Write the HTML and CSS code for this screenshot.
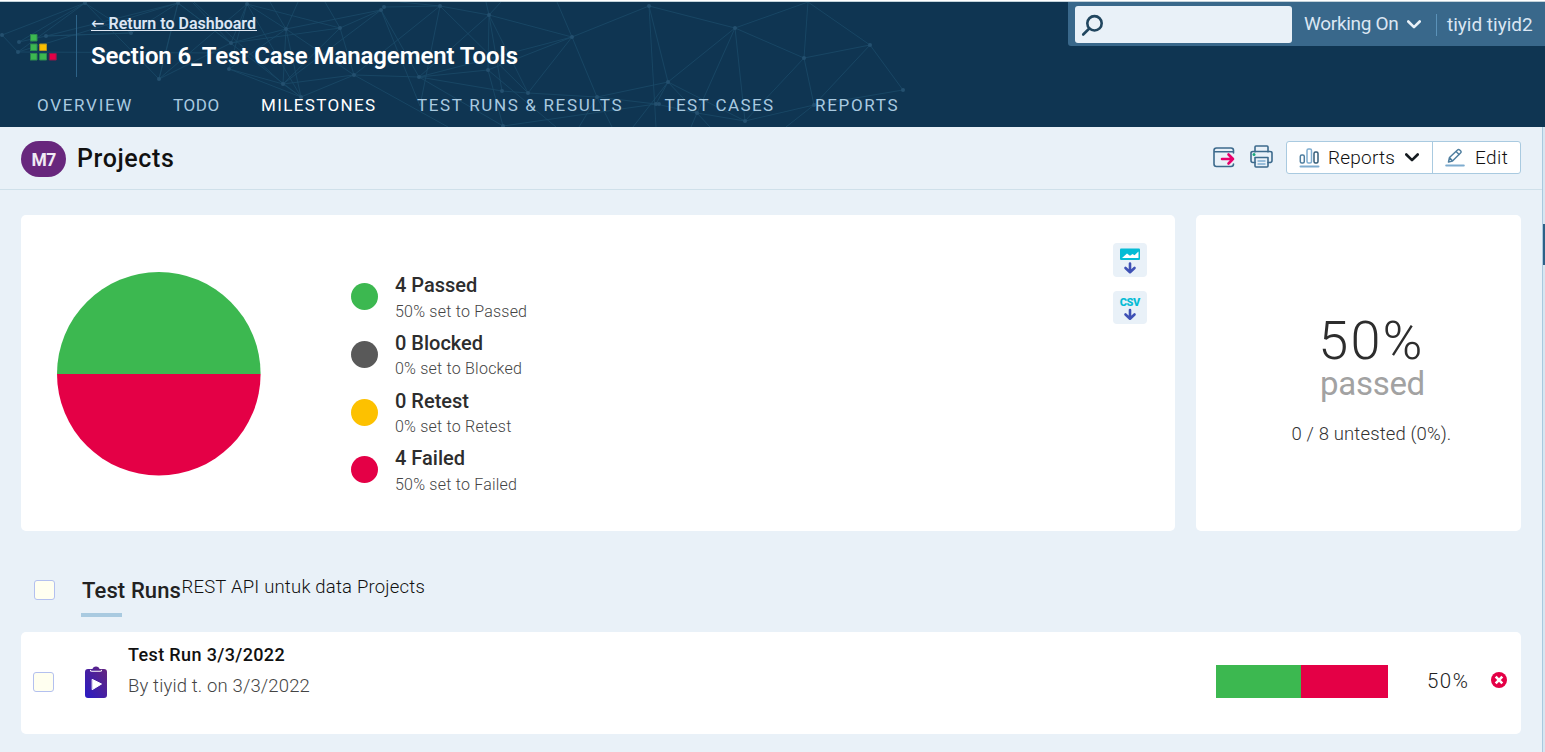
FILE: index.html
```html
<!DOCTYPE html>
<html lang="en">
<head>
<meta charset="utf-8">
<title>Projects - Milestone</title>
<link rel="stylesheet" href="styles.css">
</head>
<body>
<header class="header">
  <svg class="network" width="920" height="125" viewBox="0 2 920 125">
    <g class="network-lines">
      <path d="M2 35 85 3 18 52 2 35M19 42 85 3M19 42 46 36M46 36 178 3 18 52 231 53M85 3 131 33 46 36M85 3 159 79 178 3 231 43 247 4M46 36 131 33 178 3M159 79 178 3M159 79 247 4 229 69M159 79 231 43 286 29 247 4 340 28 231 43 193 3M178 3 301 97 229 69 286 29 283 84 229 69M194 2 283 84 340 28 381 10 286 29M286 29 270 2M286 29 298 2M283 84 301 97 286 29 354 75 340 28M247 4 301 97M340 28 325 2M381 10 283 84 354 75 301 97M384 7 440 6 400 2M381 10 419 77 354 75M381 10 420 106 440 6M440 6 489 15 572 37 649 6 735 28 808 2 870 45 804 58 735 28M440 6 528 93M440 6 354 75M489 15 486 2M489 15 501 2M489 15 488 70 503 126 419 77M489 15 502 91 528 93 597 97 668 82 649 6 656 127M489 15 528 93M489 15 419 77 488 70 572 37M572 37 419 77M572 37 557 2M572 37 528 93M572 37 597 97 612 127M488 70 556 127M419 77 502 91M597 97 656 104 668 82 735 28 697 113 668 82 745 121 735 28M668 82 633 127M656 104 697 113 745 121 814 105 804 58 808 2M804 58 745 121M870 45 903 90 814 105 870 45M814 105 786 127M697 113 691 127M697 113 710 127M503 126 656 104M354 75 448 127M597 97 579 127"/>
    </g>
    <g class="network-nodes">
      <circle cx="2" cy="35" r="2"/><circle cx="19" cy="42" r="2"/><circle cx="18" cy="52" r="2"/><circle cx="46" cy="36" r="2"/><circle cx="85" cy="3" r="2"/><circle cx="178" cy="3" r="2"/><circle cx="247" cy="4" r="2"/><circle cx="286" cy="29" r="2"/><circle cx="340" cy="28" r="2"/><circle cx="131" cy="33" r="2"/><circle cx="231" cy="43" r="2"/><circle cx="229" cy="69" r="2"/><circle cx="159" cy="79" r="2"/><circle cx="283" cy="84" r="2"/><circle cx="301" cy="97" r="2"/><circle cx="354" cy="75" r="2"/><circle cx="381" cy="10" r="2"/><circle cx="384" cy="7" r="2"/><circle cx="440" cy="6" r="2"/><circle cx="489" cy="15" r="2"/><circle cx="572" cy="37" r="2"/><circle cx="419" cy="77" r="2"/><circle cx="488" cy="70" r="2"/><circle cx="502" cy="91" r="2"/><circle cx="528" cy="93" r="2"/><circle cx="597" cy="97" r="2"/><circle cx="503" cy="126" r="2"/><circle cx="649" cy="6" r="2"/><circle cx="668" cy="82" r="2"/><circle cx="656" cy="104" r="2"/><circle cx="659" cy="104" r="2"/><circle cx="697" cy="113" r="2"/><circle cx="745" cy="121" r="2"/><circle cx="735" cy="28" r="2"/><circle cx="804" cy="58" r="2"/><circle cx="870" cy="45" r="2"/><circle cx="903" cy="90" r="2"/><circle cx="814" cy="105" r="2"/>
    </g>
  </svg>
  <div class="header-main">
    <svg class="logo" width="28" height="27" viewBox="0 0 28 27">
      <g class="logo-green"><rect x=".5" y=".5" width="6.5" height="6.5"/><rect x=".5" y="10" width="6.5" height="6.5"/><rect x=".5" y="19.500" width="6.500" height="6.500"/><rect x="10" y="19.500" width="6.500" height="6.500"/></g>
      <rect class="logo-yellow" x="10" y="10" width="6.500" height="6.500"/>
      <rect class="logo-red" x="19.700" y="19.500" width="6.500" height="6.500"/>
    </svg>
    <div class="titles">
      <a class="return"><span class="return-arrow">←</span>Return to Dashboard</a>
      <h1 class="project-title">Section 6_Test Case Management Tools</h1>
    </div>
    <div class="userbar">
      <div class="search">
        <svg width="24" height="24" viewBox="0 0 24 24"><circle cx="13.500" cy="9.300" r="7.200"/><path d="M8.300 14.500 2.200 20.500"/></svg>
      </div>
      <span class="working">Working On</span>
      <svg class="chevron" width="14" height="10" viewBox="0 0 14 10"><path d="M1.300 1.500 7 7.200 12.700 1.500"/></svg>
      <span class="user">tiyid tiyid2</span>
    </div>
  </div>
  <nav class="tabs">
    <a class="tab wide">OVERVIEW</a>
    <a class="tab tight">TODO</a>
    <a class="tab active">MILESTONES</a>
    <a class="tab runs">TEST RUNS &amp; RESULTS</a>
    <a class="tab">TEST CASES</a>
    <a class="tab wide">REPORTS</a>
  </nav>
</header>
<div class="body">
  <main class="content">
    <div class="toolbar">
      <span class="badge">M7</span>
      <h2 class="page-title">Projects</h2>
      <div class="tools">
        <svg class="line-icon export" width="22" height="21" viewBox="0 0 22 21">
          <path d="M20.500 6V3.500Q20.500 1 18 1H3.500Q1 1 1 3.500V17Q1 19.500 3.500 19.500H18Q20.500 19.500 20.500 17M1 4.800H20.500"/>
          <path class="pink" d="M9 12H20M15.500 7.500 20 12 15.500 16.500"/>
        </svg>
        <svg class="line-icon print" width="23" height="23" viewBox="0 0 23 23">
          <path d="M5 7V2Q5 1 6 1H17Q18 1 18 2V7M5 17.500H3Q1 17.500 1 15.500V8Q1 6.500 3 6.500H20Q22 6.500 22 8V15.500Q22 17.500 20 17.500H18"/>
          <path d="M5 12.500H18V21Q18 22 17 22H6Q5 22 5 21Z"/>
          <path class="lightline" d="M8 16H15M8 19H15"/><circle class="dot" cx="4" cy="9.500" r="1.500"/>
        </svg>
        <div class="buttons">
          <a class="button reports">
            <svg width="21" height="20" viewBox="0 0 21 20"><rect class="s1" x="1.300" y="7" width="4" height="8" rx="1.500"/><rect class="s2" x="8" y="1" width="4.500" height="14" rx="1.500"/><rect class="s3" x="15" y="4" width="4" height="11" rx="1.500"/><path class="base" d="M1.500 18.500H19.500"/></svg>
            <span>Reports</span>
            <svg class="chevron dark" width="14" height="10" viewBox="0 0 14 10"><path d="M1.300 1.500 7 7.200 12.700 1.500"/></svg>
          </a>
          <a class="button edit">
            <svg width="20" height="19" viewBox="0 0 20 19"><path class="s1" d="M3.500 14 4.500 9.500 12.500 2Q13.500 1 14.700 2L15.500 2.800Q16.700 4 15.500 5L7.500 13ZM11 3.500 14.200 6.500M4.500 9.500 7.500 13"/><path class="base" d="M1.200 17.500H18.800"/></svg>
            <span>Edit</span>
          </a>
        </div>
      </div>
    </div>
    <div class="summary">
      <section class="card chart">
        <svg class="pie" width="204" height="204" viewBox="0 0 204 204"><path class="fill-passed" d="M0 102A101.800 102 0 0 1 203.600 102Z"/><path class="fill-failed" d="M0 102A101.800 101.500 0 0 0 203.600 102Z"/></svg>
        <ul class="legend">
          <li><i class="bullet passed"></i><div><b>4 Passed</b><small>50% set to Passed</small></div></li>
          <li><i class="bullet blocked"></i><div><b>0 Blocked</b><small>0% set to Blocked</small></div></li>
          <li><i class="bullet retest"></i><div><b>0 Retest</b><small>0% set to Retest</small></div></li>
          <li><i class="bullet failed"></i><div><b>4 Failed</b><small>50% set to Failed</small></div></li>
        </ul>
        <div class="downloads">
          <a class="download"><svg width="34" height="34" viewBox="0 0 34 34"><rect class="cyan" x="7" y="5.500" width="20" height="11.500" rx="1"/><path class="mountain" d="M9 15 14 10.500 17 12.800 19.500 11 21.500 12.200 25.500 8.500V15Z"/><path class="down" d="M17 20.500V29M12.500 25 17 29.200 21.500 25"/></svg></a>
          <a class="download"><svg width="34" height="33" viewBox="0 0 34 33"><text class="csv" x="6.800" y="15" textLength="20.500">CSV</text><path class="down" d="M17 19V27.500M12.500 23.500 17 27.700 21.500 23.500"/></svg></a>
        </div>
      </section>
      <section class="card score">
        <div class="score-value">50%</div>
        <div class="score-label">passed</div>
        <div class="score-note">0 / 8 untested (0%).</div>
      </section>
    </div>
    <div class="section-head">
      <span class="checkbox"></span>
      <h3 class="section-title">Test Runs</h3>
      <span class="section-note">REST API untuk data Projects</span>
    </div>
    <section class="card run">
      <span class="checkbox"></span>
      <svg class="clipboard" width="24" height="33" viewBox="0 0 24 33">
        <defs><linearGradient id="violet" x1="0" y1="1" x2="1" y2="0"><stop offset="0" stop-color="#291bc5"/><stop offset="1" stop-color="#67257b"/></linearGradient></defs>
        <path fill="url(#violet)" d="M4 3H8.500Q9 .500 12 .500T15.500 3H20Q23 3 23 6V29Q23 32 20 32H4Q1 32 1 29V6Q1 3 4 3Z"/>
        <path class="clip" d="M6.500 4.200Q6.500 5.300 8 5.300H16Q17.500 5.300 17.500 4.200"/><path class="play" d="M8.500 13.500 17.500 18 8.500 23.500Z"/>
      </svg>
      <div class="run-text"><b>Test Run 3/3/2022</b><span>By tiyid t. on 3/3/2022</span></div>
      <div class="bar"><i class="passed" style="width:49.5%"></i><i class="failed" style="width:50.5%"></i></div>
      <span class="run-percent">50%</span>
      <svg class="delete" width="16" height="16" viewBox="0 0 16 16"><circle cx="8" cy="8" r="8"/><path d="M4.700 4.700 11.300 11.300M11.300 4.700 4.700 11.300"/></svg>
    </section>
  </main>
  <div class="splitter"><div class="splitter-handle"></div></div>
</div>
</body>
</html>
```
FILE: styles.css
```css
* { box-sizing: border-box; }
body {
  margin: 0;
  width: 1545px;
  height: 752px;
  overflow: hidden;
  display: flex;
  flex-direction: column;
  background: #e9f1f8;
  font-family: Roboto, "Liberation Sans", sans-serif;
  color: #222;
}
h1, h2, h3, ul { margin: 0; padding: 0; font-weight: 500; list-style: none; }
svg { display: block; flex: none; fill: none; stroke-linecap: round; stroke-linejoin: round; }

.header {
  position: relative;
  height: 127px;
  flex: none;
  background: #0f3552;
  border-top: 1px solid #fff;
  box-shadow: inset 0 1px #c3d2da;
  display: flex;
  flex-direction: column;
}
.network { position: absolute; left: 0; top: 1px; }
.network-lines { stroke: #1b4a68; stroke-width: .8; }
.network-nodes { fill: #24506f; }
.header-main { position: relative; display: flex; height: 80px; padding-top: 1px; }
.logo { margin: 32px 0 0 30px; }
.logo rect { stroke-width: 1; }
.logo-green { fill: #3cb850; stroke: #2c8c4f; }
.logo-yellow { fill: #fbbe00; stroke: #b49420; }
.logo-red { fill: #e40046; stroke: #8e1a4b; }
.titles { margin: 13px 0 0 18px; height: 62px; padding-left: 14px; border-left: 1px solid #2d6388; }
.return {
  display: flex;
  width: 166px;
  height: 16px;
  line-height: 18px;
  border-bottom: 1px solid #dfe7f2;
  color: #dce6f4;
  font-size: 16px;
  font-weight: 600;
  white-space: nowrap;
}
.return-arrow { width: 17.500px; flex: none; font-family: "DejaVu Sans", sans-serif; font-weight: 400; }
.project-title { margin-top: 10px; font-size: 24px; font-weight: 600; line-height: 30px; letter-spacing: -.1px; color: #fff; white-space: nowrap; }
.userbar {
  margin-left: auto;
  width: 477px;
  height: 44px;
  padding: 4px 12px 3px 7px;
  display: flex;
  align-items: center;
  background: #39688b;
  border-radius: 0 0 0 3px;
  color: #dbe6f3;
  font-size: 19px;
  white-space: nowrap;
}
.search { width: 217px; height: 37px; padding: 8px 6px; background: #e9f1f8; border-radius: 3px; }
.search svg { stroke: #21465f; stroke-width: 2.6; }
.working { width: 95px; margin: 0 0 2px 12px; letter-spacing: -.3px; }
.chevron { margin-left: 8px; stroke: #e9f1f8; stroke-width: 2.6; }
.user { margin-left: 15px; padding-left: 10px; height: 22px; line-height: 21px; border-left: 1px solid #5b92b9; }
.tabs {
  position: relative;
  display: grid;
  grid-template-columns: 136px 88px 156px 247.500px 150.500px auto;
  padding-left: 37px;
  height: 46px;
  font-size: 17px;
  line-height: 48px;
  letter-spacing: 1.4px;
  color: #a9cae0;
}
.tab { white-space: nowrap; }
.tab.wide { letter-spacing: 1.7px; }
.tab.tight { letter-spacing: .6px; }
.tab.runs { letter-spacing: 1.65px; }
.tab.active { margin: 0 24px 0 -17px; padding-left: 17px; border-bottom: 4px solid #e9f1f8; letter-spacing: 1.35px; color: #fff; }

.body { display: flex; flex: 1; min-height: 0; }
.content { flex: 1; min-width: 0; }
.splitter { width: 3px; padding-top: 97px; background: #d7e6f1; border-left: 1px solid #aac9de; }
.splitter-handle { height: 41px; background: #2d6187; }

.toolbar { height: 63px; padding: 0 21px; display: flex; align-items: center; border-bottom: 1px solid #cfe0ea; }
.badge {
  width: 45px;
  height: 36px;
  margin-top: 2px;
  border-radius: 18px;
  background: #68277d;
  color: #f0eaf4;
  font-size: 17.5px;
  font-weight: 700;
  letter-spacing: -.7px;
  line-height: 38px;
  text-align: center;
}
.page-title { margin: 1px 0 0 11px; font-size: 25px; letter-spacing: .6px; color: #111; }
.tools { display: flex; align-items: center; margin-left: auto; }
.line-icon { margin-top: -2px; stroke: #3c6a8c; stroke-width: 1.6; }
.print { margin: -3px 13px 0 15px; }
.line-icon .pink { stroke: #e9006c; stroke-width: 2.6; }
.line-icon .lightline { stroke: #7eaccf; stroke-width: 1.3; }
.line-icon .dot { fill: #15a87a; stroke: none; }
.buttons { display: flex; height: 33px; margin-top: -2px; border: 1px solid #a9cae0; border-radius: 3px; background: #fff; font-size: 19px; font-weight: 300; color: #111; }
.button { display: flex; align-items: center; white-space: nowrap; }
.reports { width: 146px; padding-left: 12px; border-right: 1px solid #a9cae0; }
.reports span { width: 68px; margin-left: 8px; letter-spacing: .2px; }
.reports .chevron { margin: 2px 0 0 9px; }
.button svg:first-child { margin-top: 1px; }
.edit { width: 87px; padding-left: 12px; }
.edit span { margin-left: 10px; letter-spacing: .4px; }
.s1 { stroke: #4f7e9f; stroke-width: 1.5; }
.s2 { stroke: #7eaccf; stroke-width: 1.5; }
.s3 { stroke: #355d79; stroke-width: 1.5; }
.base { stroke: #7eaccf; stroke-width: 2; }
.chevron.dark { stroke: #151b20; }

.card { background: #fff; border-radius: 5px; }
.summary { display: flex; gap: 21px; margin: 25px 21px 0; height: 316px; }
.chart { width: 1154px; display: flex; }
.pie { margin: 57px 0 0 35.5px; }
.fill-passed { fill: #3cb850; }
.fill-failed { fill: #e40046; }
.passed { background: #3cb850; }
.failed { background: #e40046; }
.blocked { background: #595959; }
.retest { background: #fdc100; }
.legend { margin: 57px 0 0 90.5px; }
.legend li { display: flex; gap: 17px; height: 57.8px; }
.bullet { width: 27px; height: 27px; margin-top: 11px; border-radius: 50%; }
.legend b { display: block; font-size: 20px; font-weight: 500; line-height: 26px; color: #2d2d2d; }
.legend small { display: block; margin-top: 1.5px; font-size: 16px; font-weight: 300; line-height: 24px; letter-spacing: .22px; color: #444; }
.downloads { margin: 28px 28px 0 auto; display: grid; gap: 14px; align-content: start; }
.download { width: 34px; background: #e9f1f8; border-radius: 4px; }
.cyan { fill: #05bcd5; }
.mountain { fill: #fff; }
.csv { fill: #05bcd5; font-size: 11px; font-weight: 900; }
.down { stroke: #3f51b5; stroke-width: 2.6; }

.score { width: 325px; padding-top: 95px; text-align: center; }
.score-value { padding-left: 26px; font-size: 54px; font-weight: 300; line-height: 62px; letter-spacing: 2.2px; color: #2d2d2d; }
.score-label { padding-left: 28px; font-size: 33px; line-height: 24px; letter-spacing: -.3px; color: #a2a2a2; }
.score-note { margin-top: 25px; padding-left: 26px; font-size: 18.5px; font-weight: 300; line-height: 26px; letter-spacing: .13px; color: #333; }

.section-head { display: flex; height: 101px; padding: 0 34px; }
.checkbox { width: 21px; height: 20px; flex: none; border: 1px solid #b3c0ef; border-radius: 3px; background: #fffff0; }
.section-head .checkbox { margin-top: 49px; }
.section-title { position: relative; width: 100px; height: 42px; margin: 44px 0 0 27px; font-size: 22px; line-height: 32px; letter-spacing: .12px; white-space: nowrap; }
.section-title::after { content: ""; position: absolute; left: -1px; bottom: 0; width: 41px; height: 4px; background: #a9cae0; }
.section-note { margin: 43px 0 0 -.5px; font-size: 18.5px; font-weight: 300; line-height: 26px; letter-spacing: .2px; white-space: nowrap; color: #111; }
.run { display: flex; margin: 0 21px; height: 102px; padding: 0 14px 0 12px; }
.run .checkbox { margin-top: 40px; }
.clipboard { margin: 34px 0 0 29.5px; }
.clip { stroke: #fff; stroke-width: 1.1; }
.play { fill: #fff; stroke: #fff; stroke-width: 1; }
.run-text { margin: 10px 0 0 20.5px; white-space: nowrap; }
.run-text b { display: block; font-size: 18px; font-weight: 500; line-height: 26px; letter-spacing: .37px; color: #111; }
.run-text span { display: block; margin-top: 5px; font-size: 18.5px; font-weight: 300; line-height: 26px; letter-spacing: .14px; color: #444; }
.bar { display: flex; width: 172px; height: 33px; margin: 33px 0 0 auto; }
.run-percent { width: 41px; margin: 36px 0 0 39px; font-size: 20.5px; font-weight: 300; line-height: 26px; letter-spacing: 1.5px; }
.delete { margin: 40px 0 0 23px; fill: #e40046; }
.delete path { stroke: #fff; stroke-width: 2.6; stroke-linecap: butt; }
```
